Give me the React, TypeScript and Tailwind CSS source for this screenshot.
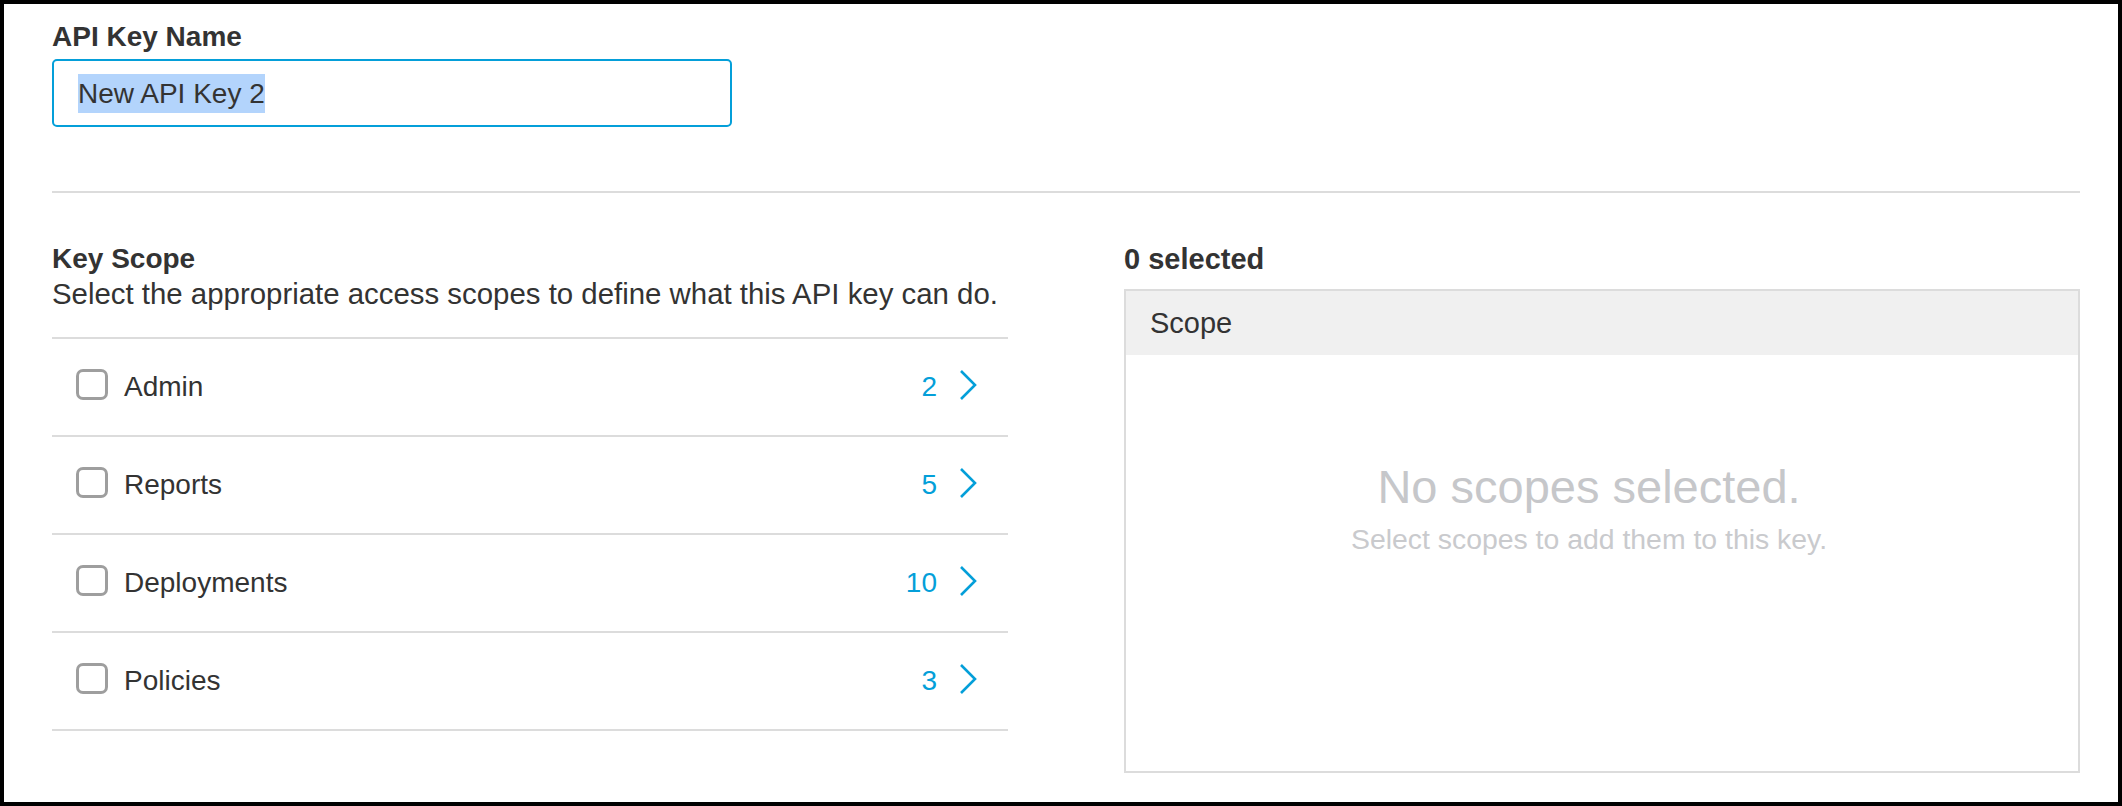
import React from "react";

const scopes = [
  { name: "Admin", count: 2 },
  { name: "Reports", count: 5 },
  { name: "Deployments", count: 10 },
  { name: "Policies", count: 3 },
];

function Chevron() {
  return (
    <svg width="18" height="32" viewBox="0 0 18 32" fill="none" className="block">
      <path d="M2 2 L16 16 L2 30" stroke="#049fd9" strokeWidth="2.6" strokeLinejoin="miter" strokeLinecap="butt" />
    </svg>
  );
}

export default function App() {
  return (
    <div
      className="box-border h-[806px] w-[2122px] border-[4px] border-black bg-white pl-[48px] pr-[38px] pt-[17px] text-[#333333]"
      style={{ fontFamily: '"Liberation Sans", Arial, Helvetica, sans-serif' }}
    >
      <div className="text-[28px] font-bold leading-[32px]">API Key Name</div>
      <div className="mt-[6px] box-border flex h-[68px] w-[680px] items-center rounded-[5px] border-2 border-[#049fd9] pl-[24px]">
        <span className="bg-[#b3d4fc] text-[28px] leading-[39px] text-[#333333]">New API Key 2</span>
      </div>

      <div className="mt-[64px] h-[2px] w-full bg-[#dcdcdc]" />

      <div className="mt-[50px] grid grid-cols-2 gap-x-[116px]">
        <div className="flex flex-col">
          <div className="text-[28px] font-bold leading-[32px]">Key Scope</div>
          <div className="text-[29.4px] leading-[38px]">
            Select the appropriate access scopes to define what this API key can do.
          </div>
          <div className="mt-[24px] border-t-2 border-[#dcdcdc]">
            {scopes.map((s) => (
              <div
                key={s.name}
                className="flex h-[98px] items-center border-b-2 border-[#dcdcdc] pl-[24px] pr-[31px]"
              >
                <span className="mb-[6px] box-border h-[31px] w-[32px] shrink-0 rounded-[7px] border-[3px] border-[#9e9e9e]" />
                <span className="ml-[16px] flex-1 text-[28px] leading-[32px]">{s.name}</span>
                <span className="text-[28px] leading-[32px] text-[#049fd9]">{s.count}</span>
                <span className="ml-[22px] mb-[4px]">
                  <Chevron />
                </span>
              </div>
            ))}
          </div>
        </div>

        <div className="flex flex-col">
          <div className="text-[29px] font-bold leading-[32px]">0 selected</div>
          <div className="mt-[14px] box-border flex h-[484px] flex-col border-2 border-[#dcdcdc]">
            <div className="flex h-[64px] items-center bg-[#f0f0f0] pl-[24px] text-[29px] leading-[32px]">
              Scope
            </div>
            <div className="flex flex-1 flex-col items-center pr-[26px] pt-[105px]">
              <div className="text-[47px] leading-[54px] text-[#c6c7ca]">No scopes selected.</div>
              <div className="mt-[9px] text-[28.4px] leading-[32px] text-[#c9cacd]">
                Select scopes to add them to this key.
              </div>
            </div>
          </div>
        </div>
      </div>
    </div>
  );
}
